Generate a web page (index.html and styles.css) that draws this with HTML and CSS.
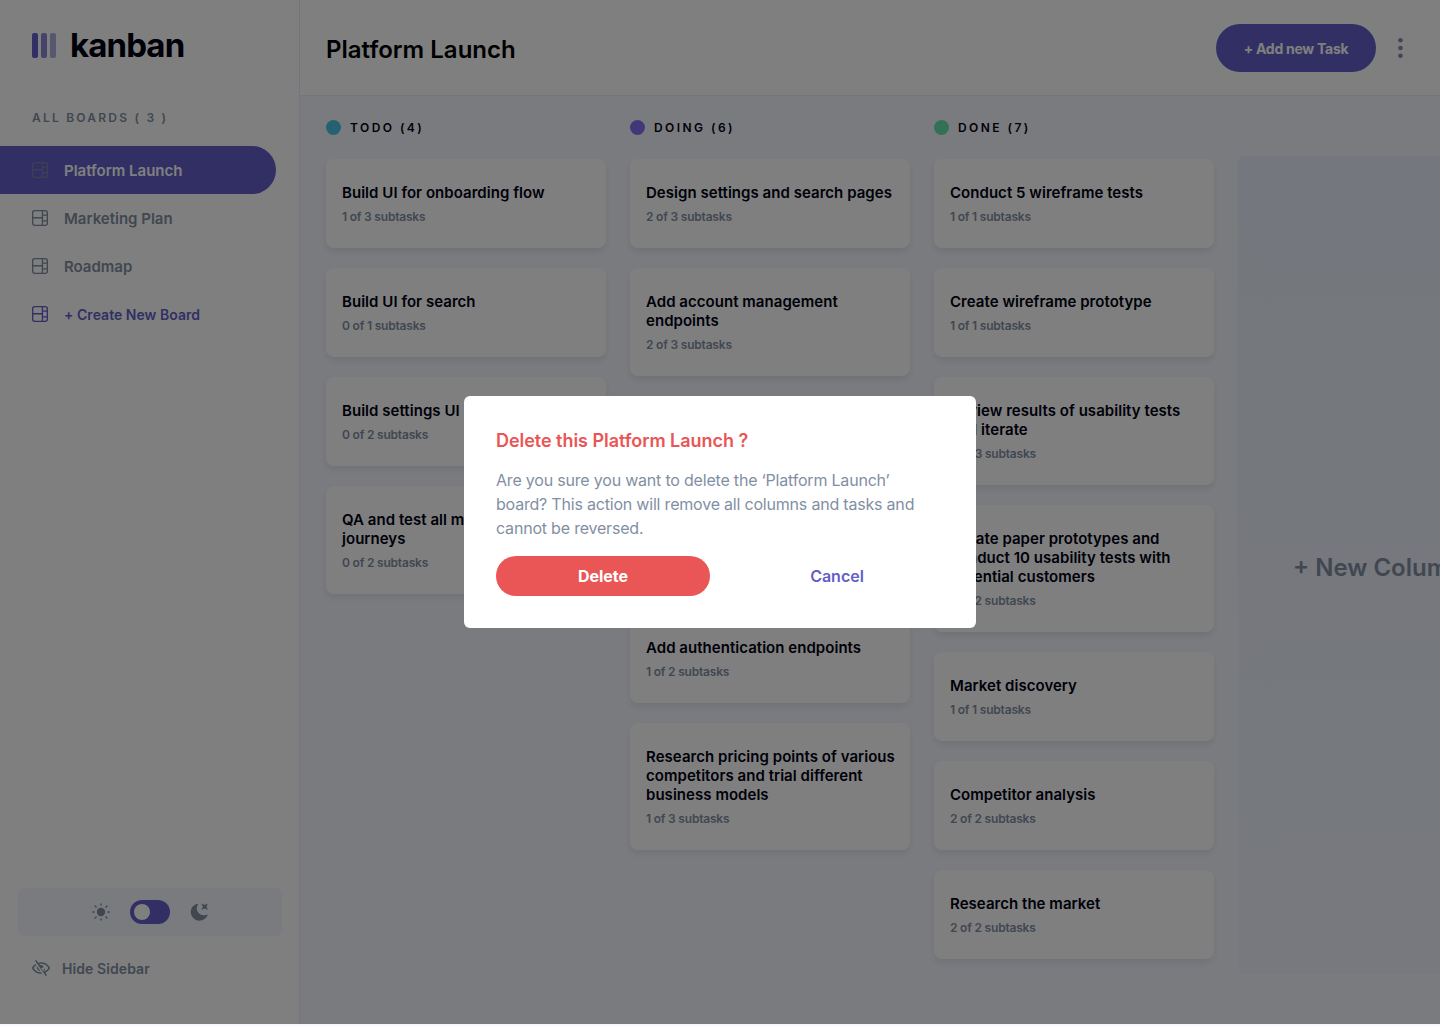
FILE: index.html
```html
<!DOCTYPE html>
<html lang="en">
<head>
<meta charset="utf-8">
<title>kanban</title>
<link rel="stylesheet" href="styles.css">
</head>
<body>
<svg class="defs" width="0" height="0">
  <symbol id="board" viewBox="0 0 16 16"><path d="M0 2.889A2.889 2.889 0 0 1 2.889 0H13.11A2.889 2.889 0 0 1 16 2.889V13.11A2.888 2.888 0 0 1 13.111 16H2.89A2.889 2.889 0 0 1 0 13.111V2.89Zm1.333 5.555v4.667c0 .859.697 1.556 1.556 1.556h6.889V8.444H1.333Zm8.445-1.333V1.333h-6.89A1.556 1.556 0 0 0 1.334 2.89V7.11h8.445Zm4.889-1.333H11.11v4.444h3.556V5.778Zm0 5.778H11.11v3.11h2a1.556 1.556 0 0 0 1.556-1.555v-1.555Zm0-7.112V2.89a1.555 1.555 0 0 0-1.556-1.556h-2v3.111h3.556Z"/></symbol>
</svg>
<div class="app">
  <aside class="sidebar">
    <div class="logo">
      <svg width="24" height="25" viewBox="0 0 24 25" fill="#635fc7"><rect width="6" height="25" rx="2"/><rect x="9" width="6" height="25" rx="2" opacity=".75"/><rect x="18" width="6" height="25" rx="2" opacity=".5"/></svg>
      <span class="logo-name">kanban</span>
    </div>
    <h3 class="boards-title">ALL BOARDS ( 3 )</h3>
    <nav class="boards">
      <a class="board active"><svg><use href="#board"/></svg><span>Platform Launch</span></a>
      <a class="board"><svg><use href="#board"/></svg><span>Marketing Plan</span></a>
      <a class="board"><svg><use href="#board"/></svg><span>Roadmap</span></a>
      <a class="board create"><svg><use href="#board"/></svg><span>+ Create New Board</span></a>
    </nav>
    <div class="theme">
      <svg width="18" height="18" viewBox="0 0 18 18" fill="#828fa3"><circle cx="9" cy="9" r="4.2"/><g stroke="#828fa3" stroke-width="1.4" stroke-linecap="round"><path d="M9 .9v1.2M9 15.9v1.2M.9 9h1.2M15.9 9h1.2M3.1 3.1l1 1M13.9 13.9l1 1M3.1 14.9l1-1M13.9 4.1l1-1"/></g></svg>
      <span class="toggle"><i></i></span>
      <svg width="18" height="18" viewBox="0 0 16 16" fill="#828fa3"><path d="M6.474.682c.434-.11.718.406.481.78A6.067 6.067 0 0 0 6.01 4.72c0 3.418 2.827 6.187 6.314 6.187.89.002 1.77-.182 2.584-.54.408-.18.894.165.724.57-1.16 2.775-3.944 4.73-7.194 4.73-4.292 0-7.771-3.41-7.771-7.615 0-3.541 2.466-6.518 5.807-7.37Zm8.433.07c.442-.294.969.232.674.674l-.525.787a1.943 1.943 0 0 0 0 2.157l.525.788c.295.441-.232.968-.674.673l-.787-.525a1.943 1.943 0 0 0-2.157 0l-.786.525c-.442.295-.97-.232-.675-.673l.525-.788a1.943 1.943 0 0 0 0-2.157l-.525-.787c-.295-.442.232-.968.674-.673l.787.525a1.943 1.943 0 0 0 2.157 0l.787-.525Z"/></svg>
    </div>
    <div class="hide">
      <svg width="18" height="16" viewBox="0 0 18 16" fill="#828fa3"><path d="M8.522 11.223a4.252 4.252 0 0 1-3.654-5.22l3.654 5.22ZM9 12.25A8.685 8.685 0 0 1 1.5 8a8.612 8.612 0 0 1 2.76-2.864l-.86-1.23A10.112 10.112 0 0 0 .208 7.238a1.5 1.5 0 0 0 0 1.524A10.187 10.187 0 0 0 9 13.75c.414 0 .828-.025 1.239-.074l-1-1.43A8.88 8.88 0 0 1 9 12.25Zm8.792-3.488a10.14 10.14 0 0 1-4.486 4.046l1.504 2.148a.375.375 0 0 1-.092.523l-.648.453a.375.375 0 0 1-.523-.092L3.19 1.044A.375.375 0 0 1 3.282.52L3.93.068a.375.375 0 0 1 .523.092l1.735 2.479A9.981 9.981 0 0 1 9 2.25c3.687 0 6.98 1.938 8.792 4.988a1.5 1.5 0 0 1 0 1.524ZM16.5 8A8.674 8.674 0 0 0 9 3.75c-.596 0-1.186.061-1.762.18l.78 1.113a4.25 4.25 0 0 1 4.228 6.039l-.826-1.18A2.74 2.74 0 0 0 9 5.25v.02a1.5 1.5 0 1 1-.3 2.2l2.6 3.72 1.137.165A8.64 8.64 0 0 0 16.5 8Z"/></svg>
      <span>Hide Sidebar</span>
    </div>
  </aside>
  <div class="main">
    <header class="header">
      <h1>Platform Launch</h1>
      <button class="add">+ Add new Task</button>
      <svg width="5" height="20" viewBox="0 0 5 20" fill="#828fa3"><circle cx="2.5" cy="2.3" r="2.3"/><circle cx="2.5" cy="10" r="2.3"/><circle cx="2.5" cy="17.7" r="2.3"/></svg>
    </header>
    <main class="columns">
      <section class="column">
        <h2><i class="dot todo"></i>TODO (4)</h2>
        <article class="card"><h4>Build UI for onboarding flow</h4><p>1 of 3 subtasks</p></article>
        <article class="card"><h4>Build UI for search</h4><p>0 of 1 subtasks</p></article>
        <article class="card"><h4>Build settings UI</h4><p>0 of 2 subtasks</p></article>
        <article class="card"><h4>QA and test all major user<br>journeys</h4><p>0 of 2 subtasks</p></article>
      </section>
      <section class="column">
        <h2><i class="dot doing"></i>DOING (6)</h2>
        <article class="card"><h4>Design settings and search pages</h4><p>2 of 3 subtasks</p></article>
        <article class="card"><h4>Add account management<br>endpoints</h4><p>2 of 3 subtasks</p></article>
        <article class="card"><h4>Design onboarding flow</h4><p>1 of 3 subtasks</p></article>
        <article class="card"><h4>Add search endpoints</h4><p>1 of 2 subtasks</p></article>
        <article class="card"><h4>Add authentication endpoints</h4><p>1 of 2 subtasks</p></article>
        <article class="card"><h4>Research pricing points of various<br>competitors and trial different<br>business models</h4><p>1 of 3 subtasks</p></article>
      </section>
      <section class="column">
        <h2><i class="dot done"></i>DONE (7)</h2>
        <article class="card"><h4>Conduct 5 wireframe tests</h4><p>1 of 1 subtasks</p></article>
        <article class="card"><h4>Create wireframe prototype</h4><p>1 of 1 subtasks</p></article>
        <article class="card"><h4>Review results of usability tests<br>and iterate</h4><p>3 of 3 subtasks</p></article>
        <article class="card"><h4>Create paper prototypes and<br>conduct 10 usability tests with<br>potential customers</h4><p>2 of 2 subtasks</p></article>
        <article class="card"><h4>Market discovery</h4><p>1 of 1 subtasks</p></article>
        <article class="card"><h4>Competitor analysis</h4><p>2 of 2 subtasks</p></article>
        <article class="card"><h4>Research the market</h4><p>2 of 2 subtasks</p></article>
      </section>
      <div class="new-column">+ New Column</div>
    </main>
  </div>
</div>
<div class="overlay">
  <div class="modal">
    <h3>Delete this Platform Launch ?</h3>
    <p>Are you sure you want to delete the ‘Platform Launch’<br>board? This action will remove all columns and tasks and<br>cannot be reversed.</p>
    <div class="actions"><button class="delete">Delete</button><button class="cancel">Cancel</button></div>
  </div>
</div>
</body>
</html>
```
FILE: styles.css
```css
* { box-sizing: border-box; margin: 0; padding: 0; }
html, body { height: 100%; overflow: hidden; }
body { font-family: Inter, "Liberation Sans", sans-serif; background: #f4f7fd; color: #000112; }
button { border: 0; font-family: inherit; }
svg { display: block; flex: none; }
.defs { position: absolute; }
.app { display: flex; height: 1024px; overflow: hidden; }

.sidebar { display: flex; flex-direction: column; flex: none; width: 300px; background: #fff; border-right: 1px solid #e4ebfa; }
.logo { display: flex; align-items: center; gap: 14px; height: 40px; margin: 25px 0 0 32px; }
.logo-name { font-size: 33px; font-weight: 700; letter-spacing: -.9px; line-height: 40px; }
.boards-title { margin: 44px 0 20px 32px; font-size: 12px; line-height: 17px; font-weight: 600; letter-spacing: 2.22px; color: #828fa3; }
.boards { width: 276px; }
.board { display: flex; align-items: center; gap: 16px; height: 48px; padding-left: 32px; border-radius: 0 24px 24px 0; font-size: 15px; font-weight: 600; letter-spacing: 0; color: #828fa3; }
.board svg { width: 16px; height: 16px; fill: currentColor; }
.board.active { background: #635fc7; color: #fff; }
.board.active svg { fill: #828fa3; opacity: .7; }
.board.create { color: #635fc7; font-size: 14px; letter-spacing: .03px; }
.theme { display: flex; align-items: center; justify-content: center; gap: 20px; width: 264px; height: 48px; margin: auto 0 0 18px; border-radius: 6px; background: #f4f7fd; }
.toggle { display: flex; align-items: center; width: 40px; height: 24px; padding-left: 4px; border-radius: 12px; background: #635fc7; }
.toggle i { width: 16px; height: 16px; border-radius: 50%; background: #fff; }
.hide { display: flex; align-items: center; gap: 12px; height: 20px; margin: 22px 0 46px 32px; font-size: 14px; font-weight: 600; letter-spacing: .08px; color: #828fa3; }

.main { display: flex; flex-direction: column; flex: 1; min-width: 0; }
.header { display: flex; align-items: center; height: 96px; padding: 0 37px 0 26px; background: #fff; border-bottom: 1px solid #e4ebfa; }
.header h1 { flex: 1; font-size: 24px; font-weight: 600; letter-spacing: .02px; padding-top: 3px; color: #000; }
.add { width: 160px; height: 48px; margin-right: 22px; padding-top: 1px; border-radius: 24px; background: #635fc7; color: #fff; font-size: 14px; font-weight: 700; letter-spacing: -.27px; }
.columns { display: flex; gap: 24px; flex: 1; padding: 24px 0 0 26px; overflow: hidden; background: #f4f7fd; }
.column { display: flex; flex-direction: column; flex: none; gap: 20px; width: 280px; }
.column h2 { display: flex; align-items: center; gap: 9px; height: 15px; margin-bottom: 4px; font-size: 12px; font-weight: 600; letter-spacing: 2.45px; }
.dot { width: 15px; height: 15px; border-radius: 50%; }
.todo { background: #49c4e5; }
.doing { background: #8471f2; }
.done { background: #67e2ae; }
.card { padding: 24px 16px 23px; border-radius: 8px; background: #fff; box-shadow: 0 4px 6px rgba(54, 78, 126, .1); }
.card h4 { font-size: 15px; line-height: 19px; font-weight: 600; letter-spacing: .04px; white-space: nowrap; }
.card p { margin-top: 7px; font-size: 12px; line-height: 16px; font-weight: 600; letter-spacing: -.2px; color: #828fa3; }
.new-column { display: flex; align-items: center; justify-content: center; flex: none; width: 280px; height: 818px; margin-top: 36px; padding-top: 4px; border-radius: 6px; background: linear-gradient(#e9effa, rgba(233, 239, 250, .5)); color: #828fa3; font-size: 24px; font-weight: 600; white-space: nowrap; }

.overlay { position: absolute; inset: 0 0 auto 0; display: flex; align-items: center; justify-content: center; height: 1024px; background: rgba(0, 0, 0, .5); }
.modal { width: 512px; height: 232px; padding: 33px 32px 32px; border-radius: 6px; background: #fff; }
.modal h3 { font-size: 18px; line-height: 24px; font-weight: 600; letter-spacing: -.04px; color: #ea5555; }
.modal p { margin-top: 15px; font-size: 16px; line-height: 24px; letter-spacing: -.2px; color: #828fa3; white-space: nowrap; }
.actions { display: flex; gap: 20px; margin-top: 16px; }
.actions button { width: 214px; height: 40px; border-radius: 20px; font-size: 16px; font-weight: 600; }
.actions .delete { background: #ea5555; color: #fff; font-weight: 700; }
.actions .cancel { background: #fff; color: #635fc7; }
```
